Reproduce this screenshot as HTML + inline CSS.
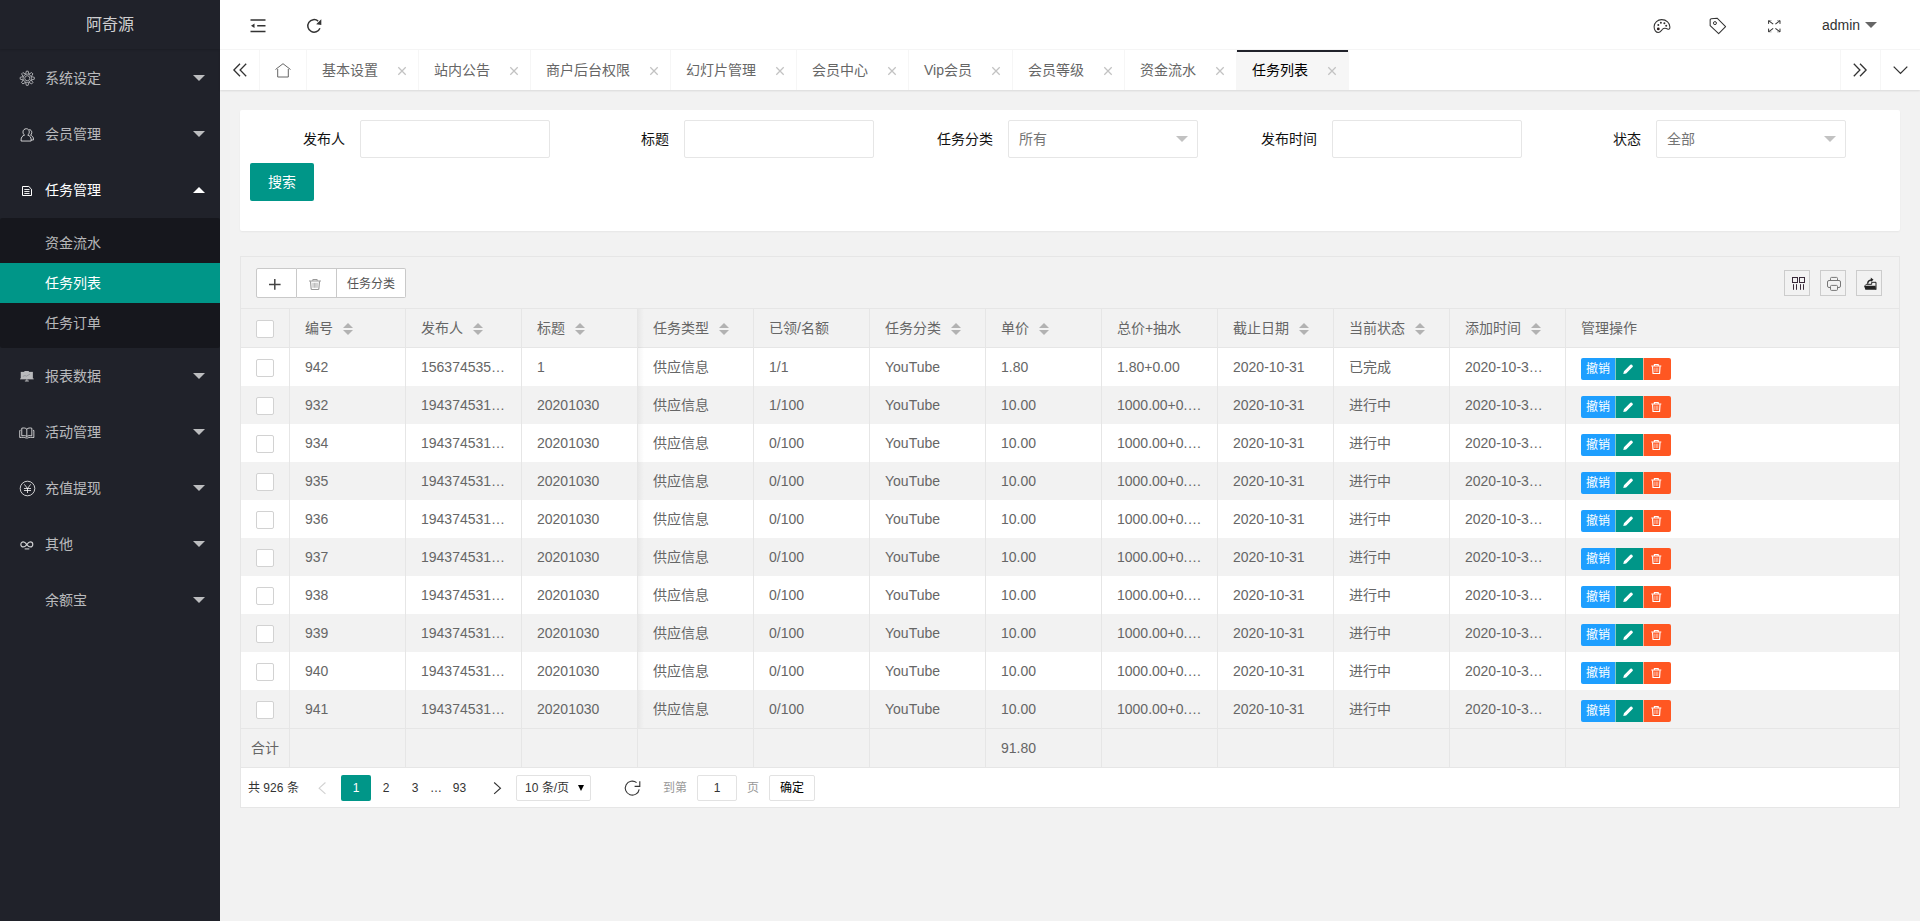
<!DOCTYPE html>
<html lang="zh-CN">
<head>
<meta charset="utf-8">
<title>任务列表</title>
<style>
*{box-sizing:border-box;margin:0;padding:0}
html,body{width:1920px;height:921px;overflow:hidden;background:#f2f2f2}
body{position:relative;font-family:"Liberation Sans",sans-serif;font-size:14px;color:#666;line-height:24px}
.abs{position:absolute}
.nw{white-space:nowrap;overflow:hidden}
svg{display:block;position:absolute;overflow:visible}
/* side */
#side{position:absolute;left:0;top:0;width:220px;height:921px;background:#20222a;overflow:hidden}
#logo{position:absolute;left:0;top:0;width:220px;height:49px;line-height:49px;text-align:center;font-size:16px;color:rgba(255,255,255,.8);box-shadow:0 1px 2px 0 rgba(0,0,0,.15);white-space:nowrap}
.ni{position:absolute;left:0;width:220px;height:56px;line-height:56px;color:rgba(255,255,255,.7);white-space:nowrap}
.ni span{position:absolute;left:45px;top:0}
.ni i{position:absolute;left:193px;top:25px;width:0;height:0;border:6px solid transparent;border-top-color:rgba(255,255,255,.7);border-bottom-width:0}
.ni i.up{top:25px;border:6px solid transparent;border-bottom-color:#fff;border-top-width:0}
#sub{position:absolute;left:0;top:218px;width:220px;height:130px;background:rgba(0,0,0,.3);border-radius:2px}
.si{position:absolute;left:0;width:220px;height:40px;line-height:40px;padding-left:45px;color:rgba(255,255,255,.7);white-space:nowrap}
.si.on{background:#009688;color:#fff}
/* header */
#hd{position:absolute;left:220px;top:0;width:1700px;height:50px;background:#fff;border-bottom:1px solid #f6f6f6}
#tabs{position:absolute;left:220px;top:50px;width:1700px;height:40px;background:#fff;box-shadow:0 1px 2px 0 rgba(0,0,0,.1)}
.tb{position:absolute;top:0;height:40px;line-height:40px;border-right:1px solid #f6f6f6;padding-left:15px;color:#666;white-space:nowrap;overflow:hidden}
.tb.on{background:#f6f6f6;color:#000}
.tb.on:before{content:"";position:absolute;left:0;top:0;right:0;height:2px;background:#20222a}
.tc{position:absolute;top:0;height:40px;width:40px}
/* card */
#c1{position:absolute;left:240px;top:110px;width:1660px;height:121px;background:#fff;border-radius:2px;box-shadow:0 1px 2px 0 rgba(0,0,0,.05)}
.lb{position:absolute;top:120px;width:110px;height:38px;line-height:38px;padding-right:15px;text-align:right;color:#111;white-space:nowrap;overflow:hidden}
.ip{position:absolute;top:120px;width:190px;height:38px;line-height:36px;border:1px solid #e6e6e6;border-radius:2px;background:#fff;padding-left:10px;color:#757575;white-space:nowrap;overflow:hidden}
.ip i{position:absolute;right:9px;top:15px;width:0;height:0;border:6px solid transparent;border-top-color:#c2c2c2;border-bottom-width:0}
#sbtn{position:absolute;left:250px;top:163px;width:64px;height:38px;line-height:38px;background:#009688;color:#fff;text-align:center;border-radius:2px;white-space:nowrap;overflow:hidden}
/* table */
#tv{position:absolute;left:240px;top:256px;width:1660px;height:552px;border:1px solid #e6e6e6;background:#fff}
#tool{position:absolute;left:241px;top:257px;width:1658px;height:52px;background:#f2f2f2;border-bottom:1px solid #e6e6e6}
.tbn{position:absolute;top:268px;height:30px;line-height:30px;background:#fff;border:1px solid #c9c9c9;color:#555;font-size:12px;text-align:center;white-space:nowrap;overflow:hidden}
.tl{position:absolute;top:270px;width:26px;height:26px;border:1px solid #ccc;background:transparent}
#th{position:absolute;left:241px;top:309px;width:1658px;height:39px;background:#f2f2f2;border-bottom:1px solid #e6e6e6}
.r{position:absolute;left:241px;width:1658px;height:38px;background:#fff}
.r.e{background:#f2f2f2}
.c{position:absolute;top:5px;height:28px;line-height:28px;width:85px;white-space:nowrap;overflow:hidden;color:#666}
.vl{position:absolute;top:309px;width:1px;height:459px;background:#e6e6e6}
.cb{position:absolute;left:15px;width:18px;height:18px;border:1px solid #d2d2d2;border-radius:2px;background:#fff}
.so{position:absolute;top:11px;width:10px;height:20px}
.so:before{content:"";position:absolute;left:0;top:3px;border:5px solid transparent;border-bottom-color:#b2b2b2;border-top-width:0}
.so:after{content:"";position:absolute;left:0;top:10px;border:5px solid transparent;border-top-color:#b2b2b2;border-bottom-width:0}
.ob{position:absolute;top:10px;height:22px;line-height:22px;font-size:12px;color:#fff;text-align:center;white-space:nowrap;overflow:hidden}
#tot{position:absolute;left:241px;top:729px;width:1658px;height:39px;background:#f2f2f2;border-bottom:1px solid #e6e6e6;border-top:0}
#hl{position:absolute;left:241px;top:728px;width:1658px;height:1px;background:#e6e6e6}
/* page */
.pg{position:absolute;top:775px;height:26px;line-height:26px;font-size:12px;color:#333;white-space:nowrap;overflow:hidden;text-align:center}
</style>
</head>
<body>
<div id="side">
<div id="logo">阿奇源</div>
<div class="ni" style="top:50px"><svg style="left:18.600px;top:20.400px" width="16.500" height="16.500" viewBox="-8.500 -8.500 17 17"><g fill="none" stroke="#c4c5c8" stroke-width=".820" stroke-linejoin="round"><circle r="4.300"/><circle r="2.600"/><path d="M-1.700 -4.200L-.950 -7.300H.950L1.700 -4.200" transform="rotate(0)"/><path d="M-1.700 -4.200L-.950 -7.300H.950L1.700 -4.200" transform="rotate(45)"/><path d="M-1.700 -4.200L-.950 -7.300H.950L1.700 -4.200" transform="rotate(90)"/><path d="M-1.700 -4.200L-.950 -7.300H.950L1.700 -4.200" transform="rotate(135)"/><path d="M-1.700 -4.200L-.950 -7.300H.950L1.700 -4.200" transform="rotate(180)"/><path d="M-1.700 -4.200L-.950 -7.300H.950L1.700 -4.200" transform="rotate(225)"/><path d="M-1.700 -4.200L-.950 -7.300H.950L1.700 -4.200" transform="rotate(270)"/><path d="M-1.700 -4.200L-.950 -7.300H.950L1.700 -4.200" transform="rotate(315)"/></g></svg><span>系统设定</span><i></i></div>
<div class="ni" style="top:106px"><svg style="left:19.600px;top:21.500px" width="15.300" height="14.400" viewBox="0 0 17 16"><g fill="none" stroke="rgba(255,255,255,.78)" stroke-width="1.1" stroke-linejoin="round"><path d="M7 .8c2 0 3.3 1.5 3.3 3.6 0 1.5-.7 2.8-1.7 3.5 2.3.6 3.8 2.5 3.8 5.3v1.3H1.2v-1.300c0-2.800 1.500-4.700 3.800-5.300-1-.7-1.700-2-1.700-3.500C3.300 2.300 5 .8 7 .8z"/><path d="M10.300 1.700c1.700.200 2.800 1.500 2.800 3.300 0 1.300-.5 2.300-1.400 3 1.900.6 3.300 2.200 3.300 4.600v.7h-2.500"/></g></svg><span>会员管理</span><i></i></div>
<div class="ni" style="top:162px;color:#fff"><svg style="left:22px;top:24px" width="10" height="10" viewBox="0 0 10 10"><g fill="none" stroke="#fff" stroke-width="1"><path d="M.500 .500H6.800L9.500 3.200V9.500H.500z" stroke-linejoin="round"/><path d="M2.300 3.500H7.500M2.300 5.500H7.500M2.300 7.500H7.500" stroke-opacity=".9"/></g></svg><span>任务管理</span><i class="up"></i></div>
<div class="ni" style="top:348px"><svg style="left:20.200px;top:23px" width="14.200" height="11.300" preserveAspectRatio="none" viewBox="0 0 15 13"><g fill="#b9babc"><rect x="4.500" y="0" width="5" height="1.500" rx=".5"/><rect x=".8" y="1" width="12.800" height="8.200"/><rect x="0" y="8.600" width="14.500" height="1"/><rect x="6.600" y="9.500" width="1.300" height="1.800"/><rect x="5" y="11" width="4.500" height="1" rx=".5"/></g><path d="M3 6.200l2.300-1 1.500.8 3.800-2.500" fill="none" stroke="#84858b" stroke-width=".700"/></svg><span>报表数据</span><i></i></div>
<div class="ni" style="top:404px"><svg style="left:19.300px;top:22.700px" width="15.600" height="12" preserveAspectRatio="none" viewBox="0 0 17 13"><g fill="none" stroke="rgba(255,255,255,.78)" stroke-width="1.050" stroke-linejoin="round"><path d="M8.500 2.300C7.300 1 5 .8 3 1.300v8.200c2-.4 4.300-.2 5.500.8 1.200-1 3.500-1.200 5.500-.8V1.300c-2-.5-4.300-.3-5.500 1zM8.500 2.300v8"/><path d="M1.800 3.500L.8 3.800v7.600c2.500-.3 5.500-.4 6.700.5h2c1.200-.9 4.200-.8 6.700-.5V3.800l-1-.3"/></g></svg><span>活动管理</span><i></i></div>
<div class="ni" style="top:460px"><svg style="left:19px;top:20px" width="17" height="17" viewBox="0 0 17 17"><g fill="none" stroke="rgba(255,255,255,.78)" stroke-width="1"><circle cx="8.500" cy="8.500" r="7.300"/><path d="M5.300 4.300l3.200 4.200 3.200-4.200M8.500 8.500v4.500M5 8.500h7M5 10.500h7"/></g></svg><span>充值提现</span><i></i></div>
<div class="ni" style="top:516px"><svg style="left:20px;top:24.500px" width="14" height="9.300" viewBox="0 0 15 10"><g fill="none" stroke="rgba(255,255,255,.78)" stroke-width="1.300"><path d="M7.300 3.800C6 2 4.800 1 3.500 1 2 1 .9 2.100.9 3.700S2 6.400 3.500 6.400c1.300 0 2.500-1 3.800-2.600zM7.300 3.800C8.600 2 9.800 1 11.100 1c1.500 0 2.600 1.100 2.600 2.700s-1.100 2.700-2.600 2.700c-1.300 0-2.500-1-3.800-2.600z"/><path d="M5 8.500h5" stroke-width="1.200"/></g></svg><span>其他</span><i></i></div>
<div class="ni" style="top:572px"><span>余额宝</span><i></i></div>
<div id="sub"></div>
<div class="si" style="top:223px">资金流水</div>
<div class="si on" style="top:263px">任务列表</div>
<div class="si" style="top:303px">任务订单</div>
</div>
<div id="hd">
<svg style="left:30px;top:17px" width="16" height="17" viewBox="0 0 16 17"><g fill="none" stroke="#333" stroke-width="1.500"><path d="M.500 3h15M7.200 8.800H15.500M.500 14.400h15"/></g><path d="M1 8.800l3.500-2.200v4.400z" fill="#333"/></svg>
<svg style="left:86px;top:18px" width="16" height="16" viewBox="0 0 16 16"><path d="M13.940 10.260A6.300 6.300 0 1 1 12.150 3.070" fill="none" stroke="#333" stroke-width="1.500"/><path d="M15.300 1.300V7L10.200 6.300z" fill="#333"/></svg>
<svg style="left:1433px;top:19.400px" width="18" height="15" viewBox="0 0 18 15"><path d="M8.600 .600C4.800 .600 1.100 3.500 1.100 7.700C1.100 11 3 13.500 5.300 13.500C7.500 13.500 8.200 11.500 9.900 9.900C11.300 8.700 13 9.200 15.100 10.200C16.300 10.500 16.900 10 16.900 8C16.900 4 13.500 .600 8.600 .600z" fill="none" stroke="#333" stroke-width="1.050"/><circle cx="5.300" cy="9.900" r="1.400" fill="#2a1a1a"/><circle cx="5.300" cy="5.900" r="1" fill="#333"/><circle cx="7.900" cy="3.800" r="1" fill="#333"/><circle cx="11.400" cy="4.200" r="1" fill="#333"/><circle cx="13.200" cy="6.800" r="1" fill="#333"/></svg>
<svg style="left:1489px;top:17px" width="18" height="18" viewBox="0 0 18 18"><path d="M2.200 1.650L8.100 1.200L16.600 9.700L9.650 16.650L1.150 8.550V2.600z" fill="none" stroke="#333" stroke-width="1.050" stroke-linejoin="round"/><circle cx="5.950" cy="6.100" r="1.500" fill="none" stroke="#333" stroke-width="1"/></svg>
<svg style="left:1547.800px;top:19.500px" width="12.600" height="12.500" viewBox="0 0 12.600 12.500"><g fill="none" stroke="#333" stroke-width="1"><path d="M.600 3.900V.600M12 .600V3.900M.600 8.600V11.900M12 8.600V11.900"/><path d="M.600 .600L5.200 4.200M12 .600L7.400 4.200M.600 11.900L5.200 8.300M12 11.900L7.400 8.300" stroke-width="1.050"/><path d="M.600 .600H3.600M9 .600H12M.600 11.900H3.600M12 11.900H9" stroke-opacity=".4"/></g></svg>
<div class="abs nw" style="left:1602px;top:12px;height:26px;line-height:26px;color:#333;width:40px">admin</div>
<i class="abs" style="left:1645px;top:22px;border:6px solid transparent;border-top-color:#666;border-bottom-width:0"></i>
</div>
<div id="tabs">
<div class="tc" style="left:0;border-right:1px solid #f6f6f6"><svg style="left:13px;top:13px" width="14" height="14" viewBox="0 0 14 14"><path d="M7 .800L.900 7 7 13.200M13.200 .800L7.100 7l6.100 6.200" fill="none" stroke="#333" stroke-width="1.300"/></svg></div>
<div class="tb" style="left:40px;width:47px"><svg style="left:15px;top:12.500px" width="16" height="15" viewBox="0 0 16 15"><path d="M.500 6.500L8 .700l7.500 5.800" fill="none" stroke="#666" stroke-width="1"/><path d="M2.700 6v8h10.600V6" fill="none" stroke="#666" stroke-width="1"/></svg></div>
<div class="tb" style="left:87px;width:112px">基本设置<svg style="right:12px;top:16.500px" width="8" height="8" viewBox="0 0 8 8"><path d="M.300 .300l7.400 7.400M7.700 .300L.300 7.700" stroke="#c2c2c2" stroke-width="1.250" fill="none"/></svg></div>
<div class="tb" style="left:199px;width:112px">站内公告<svg style="right:12px;top:16.500px" width="8" height="8" viewBox="0 0 8 8"><path d="M.300 .300l7.400 7.400M7.700 .300L.300 7.700" stroke="#c2c2c2" stroke-width="1.250" fill="none"/></svg></div>
<div class="tb" style="left:311px;width:140px">商户后台权限<svg style="right:12px;top:16.500px" width="8" height="8" viewBox="0 0 8 8"><path d="M.300 .300l7.400 7.400M7.700 .300L.300 7.700" stroke="#c2c2c2" stroke-width="1.250" fill="none"/></svg></div>
<div class="tb" style="left:451px;width:126px">幻灯片管理<svg style="right:12px;top:16.500px" width="8" height="8" viewBox="0 0 8 8"><path d="M.300 .300l7.400 7.400M7.700 .300L.300 7.700" stroke="#c2c2c2" stroke-width="1.250" fill="none"/></svg></div>
<div class="tb" style="left:577px;width:112px">会员中心<svg style="right:12px;top:16.500px" width="8" height="8" viewBox="0 0 8 8"><path d="M.300 .300l7.400 7.400M7.700 .300L.300 7.700" stroke="#c2c2c2" stroke-width="1.250" fill="none"/></svg></div>
<div class="tb" style="left:689px;width:104px">Vip会员<svg style="right:12px;top:16.500px" width="8" height="8" viewBox="0 0 8 8"><path d="M.300 .300l7.400 7.400M7.700 .300L.300 7.700" stroke="#c2c2c2" stroke-width="1.250" fill="none"/></svg></div>
<div class="tb" style="left:793px;width:112px">会员等级<svg style="right:12px;top:16.500px" width="8" height="8" viewBox="0 0 8 8"><path d="M.300 .300l7.400 7.400M7.700 .300L.300 7.700" stroke="#c2c2c2" stroke-width="1.250" fill="none"/></svg></div>
<div class="tb" style="left:905px;width:112px">资金流水<svg style="right:12px;top:16.500px" width="8" height="8" viewBox="0 0 8 8"><path d="M.300 .300l7.400 7.400M7.700 .300L.300 7.700" stroke="#c2c2c2" stroke-width="1.250" fill="none"/></svg></div>
<div class="tb on" style="left:1017px;width:112px">任务列表<svg style="right:12px;top:16.500px" width="8" height="8" viewBox="0 0 8 8"><path d="M.300 .300l7.400 7.400M7.700 .300L.300 7.700" stroke="#c2c2c2" stroke-width="1.250" fill="none"/></svg></div>
<div class="tc" style="left:1620px;border-left:1px solid #f6f6f6"><svg style="left:12px;top:13px" width="14" height="14" viewBox="0 0 14 14"><path d="M.800 .800L6.900 7 .800 13.200M7 .800L13.100 7 7 13.200" fill="none" stroke="#333" stroke-width="1.300"/></svg></div>
<div class="tc" style="left:1660px;border-left:1px solid #f6f6f6"><svg style="left:12px;top:15.600px" width="15" height="8.500" viewBox="0 0 15 9" preserveAspectRatio="none"><path d="M.700 .700L7.500 7.800 14.300 .700" fill="none" stroke="#333" stroke-width="1.300"/></svg></div>
</div>
<div id="c1"></div>
<div class="lb" style="left:250px">发布人</div><div class="ip" style="left:360px"></div>
<div class="lb" style="left:574px">标题</div><div class="ip" style="left:684px"></div>
<div class="lb" style="left:898px">任务分类</div><div class="ip" style="left:1008px">所有<i></i></div>
<div class="lb" style="left:1222px">发布时间</div><div class="ip" style="left:1332px"></div>
<div class="lb" style="left:1546px">状态</div><div class="ip" style="left:1656px">全部<i></i></div>
<div id="sbtn">搜索</div>
<div id="tv"></div>
<div id="tool"></div>
<div class="tbn" style="left:256px;width:41px;border-radius:2px 0 0 2px"><svg style="left:12.200px;top:10.100px" width="11.600" height="10.800" viewBox="0 0 11.600 10.800"><path d="M5.800 0v10.800M0 5.400h11.600" stroke="#444" stroke-width="1.500" fill="none"/></svg></div><div class="tbn" style="left:297px;width:40px;border-left:0"><svg style="left:12px;top:10px" width="12" height="11" viewBox="0 0 12 11"><g fill="none" stroke="#999" stroke-width="1"><path d="M0 2h12M3.800 1.800V.500h4.400v1.300"/><path d="M1.500 2.300l.600 7.200a1 1 0 0 0 1 1h5.800a1 1 0 0 0 1-1l.600-7.200" stroke-width="1.100"/><path d="M4 3.800v5M5.400 3.800v5M6.800 3.800v5M8.100 3.800v5" stroke-width=".7"/></g></svg></div><div class="tbn" style="left:337px;width:69px;border-left:0;border-radius:0 2px 2px 0">任务分类</div>
<div class="tl" style="left:1784px"><svg style="left:-1px;top:-1px" width="26" height="26" viewBox="0 0 26 26"><g fill="none" stroke="#3a2a3a" stroke-width="1"><rect x="8.500" y="7.500" width="5" height="5"/><rect x="15.500" y="7.500" width="5" height="5"/><path d="M9.500 14.200v5.600M12.500 14.200v5.600M16.500 14.200v5.600M19.500 14.200v5.600"/></g></svg></div><div class="tl" style="left:1820px"><svg style="left:-1px;top:-1px" width="26" height="26" viewBox="0 0 26 26"><g fill="none" stroke="#777" stroke-width="1"><path d="M10.500 10.500V8.400a1 1 0 0 1 1-1h5a1 1 0 0 1 1 1v2.100"/><path d="M10.500 17.500H9a1.500 1.500 0 0 1-1.500-1.500v-4A1.500 1.500 0 0 1 9 10.500h10a1.500 1.500 0 0 1 1.500 1.500v4a1.500 1.500 0 0 1-1.500 1.500h-1.500"/><rect x="10.500" y="15.400" width="7" height="5" rx="1"/></g></svg></div><div class="tl" style="left:1856px"><svg style="left:-1px;top:-1px" width="26" height="26" viewBox="0 0 26 26"><path d="M8 15.800h11.500l.5 4H9.400z" fill="#222"/><path d="M9.200 15.600l1-1.300h5.500v-2h4.300v7.400" fill="none" stroke="#222" stroke-width="1"/><path d="M11.600 13.800c.2-2.300 1.400-3.600 3.600-3.800" fill="none" stroke="#222" stroke-width="1.300"/><path d="M14.800 7.600l2.700 2.200-2.700 2.200z" fill="#222"/></svg></div>
<div id="th">
<div class="cb" style="top:11px"></div>
<div class="c" style="left:64px;top:5px;width:100px">编号</div><div class="so" style="left:102px"></div>
<div class="c" style="left:180px;top:5px;width:100px">发布人</div><div class="so" style="left:232px"></div>
<div class="c" style="left:296px;top:5px;width:100px">标题</div><div class="so" style="left:334px"></div>
<div class="c" style="left:412px;top:5px;width:100px">任务类型</div><div class="so" style="left:478px"></div>
<div class="c" style="left:528px;top:5px;width:100px">已领/名额</div>
<div class="c" style="left:644px;top:5px;width:100px">任务分类</div><div class="so" style="left:710px"></div>
<div class="c" style="left:760px;top:5px;width:100px">单价</div><div class="so" style="left:798px"></div>
<div class="c" style="left:876px;top:5px;width:100px">总价+抽水</div>
<div class="c" style="left:992px;top:5px;width:100px">截止日期</div><div class="so" style="left:1058px"></div>
<div class="c" style="left:1108px;top:5px;width:100px">当前状态</div><div class="so" style="left:1174px"></div>
<div class="c" style="left:1224px;top:5px;width:100px">添加时间</div><div class="so" style="left:1290px"></div>
<div class="c" style="left:1340px;top:5px;width:100px">管理操作</div>
</div>
<div class="r" style="top:348px"><div class="cb" style="top:11px"></div><div class="c" style="left:64px">942</div><div class="c" style="left:180px">156374535…</div><div class="c" style="left:296px">1</div><div class="c" style="left:412px">供应信息</div><div class="c" style="left:528px">1/1</div><div class="c" style="left:644px">YouTube</div><div class="c" style="left:760px">1.80</div><div class="c" style="left:876px">1.80+0.00</div><div class="c" style="left:992px">2020-10-31</div><div class="c" style="left:1108px">已完成</div><div class="c" style="left:1224px">2020-10-3…</div><div class="ob" style="left:1340px;width:34px;background:#1e9fff;border-radius:2px 0 0 2px">撤销</div><div class="ob" style="left:1374px;width:28px;background:#009688;border-left:1px solid rgba(255,255,255,.5)"><svg style="left:7px;top:5.700px" width="10.400" height="10.400" viewBox="0 0 11 11"><path d="M.300 10.700l.700-3L7.800 .900a1.200 1.200 0 0 1 1.700 0l.600.600a1.200 1.200 0 0 1 0 1.700L3.300 10z" fill="#fff"/></svg></div><div class="ob" style="left:1402px;width:28px;background:#ff5722;border-left:1px solid rgba(255,255,255,.5);border-radius:0 2px 2px 0"><svg style="left:7px;top:5.800px" width="10.600" height="10" preserveAspectRatio="none" viewBox="0 0 11 11"><g fill="none" stroke="#fff" stroke-width="1.100"><path d="M.300 2.200h10.400M3.500 2V.600h4V2"/><path d="M1.600 2.500l.500 7.900h6.800l.500-7.900" stroke-width="1.200"/><path d="M4 4v4.800M5.500 4v4.800M7 4v4.800" stroke-width=".8" stroke="#ffd0c0"/></g></svg></div></div>
<div class="r e" style="top:386px"><div class="cb" style="top:11px"></div><div class="c" style="left:64px">932</div><div class="c" style="left:180px">194374531…</div><div class="c" style="left:296px">20201030</div><div class="c" style="left:412px">供应信息</div><div class="c" style="left:528px">1/100</div><div class="c" style="left:644px">YouTube</div><div class="c" style="left:760px">10.00</div><div class="c" style="left:876px">1000.00+0.…</div><div class="c" style="left:992px">2020-10-31</div><div class="c" style="left:1108px">进行中</div><div class="c" style="left:1224px">2020-10-3…</div><div class="ob" style="left:1340px;width:34px;background:#1e9fff;border-radius:2px 0 0 2px">撤销</div><div class="ob" style="left:1374px;width:28px;background:#009688;border-left:1px solid rgba(255,255,255,.5)"><svg style="left:7px;top:5.700px" width="10.400" height="10.400" viewBox="0 0 11 11"><path d="M.300 10.700l.700-3L7.800 .900a1.200 1.200 0 0 1 1.700 0l.600.600a1.200 1.200 0 0 1 0 1.700L3.300 10z" fill="#fff"/></svg></div><div class="ob" style="left:1402px;width:28px;background:#ff5722;border-left:1px solid rgba(255,255,255,.5);border-radius:0 2px 2px 0"><svg style="left:7px;top:5.800px" width="10.600" height="10" preserveAspectRatio="none" viewBox="0 0 11 11"><g fill="none" stroke="#fff" stroke-width="1.100"><path d="M.300 2.200h10.400M3.500 2V.600h4V2"/><path d="M1.600 2.500l.500 7.900h6.800l.500-7.900" stroke-width="1.200"/><path d="M4 4v4.800M5.500 4v4.800M7 4v4.800" stroke-width=".8" stroke="#ffd0c0"/></g></svg></div></div>
<div class="r" style="top:424px"><div class="cb" style="top:11px"></div><div class="c" style="left:64px">934</div><div class="c" style="left:180px">194374531…</div><div class="c" style="left:296px">20201030</div><div class="c" style="left:412px">供应信息</div><div class="c" style="left:528px">0/100</div><div class="c" style="left:644px">YouTube</div><div class="c" style="left:760px">10.00</div><div class="c" style="left:876px">1000.00+0.…</div><div class="c" style="left:992px">2020-10-31</div><div class="c" style="left:1108px">进行中</div><div class="c" style="left:1224px">2020-10-3…</div><div class="ob" style="left:1340px;width:34px;background:#1e9fff;border-radius:2px 0 0 2px">撤销</div><div class="ob" style="left:1374px;width:28px;background:#009688;border-left:1px solid rgba(255,255,255,.5)"><svg style="left:7px;top:5.700px" width="10.400" height="10.400" viewBox="0 0 11 11"><path d="M.300 10.700l.700-3L7.800 .900a1.200 1.200 0 0 1 1.700 0l.600.600a1.200 1.200 0 0 1 0 1.700L3.300 10z" fill="#fff"/></svg></div><div class="ob" style="left:1402px;width:28px;background:#ff5722;border-left:1px solid rgba(255,255,255,.5);border-radius:0 2px 2px 0"><svg style="left:7px;top:5.800px" width="10.600" height="10" preserveAspectRatio="none" viewBox="0 0 11 11"><g fill="none" stroke="#fff" stroke-width="1.100"><path d="M.300 2.200h10.400M3.500 2V.600h4V2"/><path d="M1.600 2.500l.500 7.900h6.800l.500-7.900" stroke-width="1.200"/><path d="M4 4v4.800M5.500 4v4.800M7 4v4.800" stroke-width=".8" stroke="#ffd0c0"/></g></svg></div></div>
<div class="r e" style="top:462px"><div class="cb" style="top:11px"></div><div class="c" style="left:64px">935</div><div class="c" style="left:180px">194374531…</div><div class="c" style="left:296px">20201030</div><div class="c" style="left:412px">供应信息</div><div class="c" style="left:528px">0/100</div><div class="c" style="left:644px">YouTube</div><div class="c" style="left:760px">10.00</div><div class="c" style="left:876px">1000.00+0.…</div><div class="c" style="left:992px">2020-10-31</div><div class="c" style="left:1108px">进行中</div><div class="c" style="left:1224px">2020-10-3…</div><div class="ob" style="left:1340px;width:34px;background:#1e9fff;border-radius:2px 0 0 2px">撤销</div><div class="ob" style="left:1374px;width:28px;background:#009688;border-left:1px solid rgba(255,255,255,.5)"><svg style="left:7px;top:5.700px" width="10.400" height="10.400" viewBox="0 0 11 11"><path d="M.300 10.700l.700-3L7.800 .900a1.200 1.200 0 0 1 1.700 0l.600.600a1.200 1.200 0 0 1 0 1.700L3.300 10z" fill="#fff"/></svg></div><div class="ob" style="left:1402px;width:28px;background:#ff5722;border-left:1px solid rgba(255,255,255,.5);border-radius:0 2px 2px 0"><svg style="left:7px;top:5.800px" width="10.600" height="10" preserveAspectRatio="none" viewBox="0 0 11 11"><g fill="none" stroke="#fff" stroke-width="1.100"><path d="M.300 2.200h10.400M3.500 2V.600h4V2"/><path d="M1.600 2.500l.500 7.900h6.800l.500-7.900" stroke-width="1.200"/><path d="M4 4v4.800M5.500 4v4.800M7 4v4.800" stroke-width=".8" stroke="#ffd0c0"/></g></svg></div></div>
<div class="r" style="top:500px"><div class="cb" style="top:11px"></div><div class="c" style="left:64px">936</div><div class="c" style="left:180px">194374531…</div><div class="c" style="left:296px">20201030</div><div class="c" style="left:412px">供应信息</div><div class="c" style="left:528px">0/100</div><div class="c" style="left:644px">YouTube</div><div class="c" style="left:760px">10.00</div><div class="c" style="left:876px">1000.00+0.…</div><div class="c" style="left:992px">2020-10-31</div><div class="c" style="left:1108px">进行中</div><div class="c" style="left:1224px">2020-10-3…</div><div class="ob" style="left:1340px;width:34px;background:#1e9fff;border-radius:2px 0 0 2px">撤销</div><div class="ob" style="left:1374px;width:28px;background:#009688;border-left:1px solid rgba(255,255,255,.5)"><svg style="left:7px;top:5.700px" width="10.400" height="10.400" viewBox="0 0 11 11"><path d="M.300 10.700l.700-3L7.800 .900a1.200 1.200 0 0 1 1.700 0l.600.600a1.200 1.200 0 0 1 0 1.700L3.300 10z" fill="#fff"/></svg></div><div class="ob" style="left:1402px;width:28px;background:#ff5722;border-left:1px solid rgba(255,255,255,.5);border-radius:0 2px 2px 0"><svg style="left:7px;top:5.800px" width="10.600" height="10" preserveAspectRatio="none" viewBox="0 0 11 11"><g fill="none" stroke="#fff" stroke-width="1.100"><path d="M.300 2.200h10.400M3.500 2V.600h4V2"/><path d="M1.600 2.500l.500 7.900h6.800l.500-7.900" stroke-width="1.200"/><path d="M4 4v4.800M5.500 4v4.800M7 4v4.800" stroke-width=".8" stroke="#ffd0c0"/></g></svg></div></div>
<div class="r e" style="top:538px"><div class="cb" style="top:11px"></div><div class="c" style="left:64px">937</div><div class="c" style="left:180px">194374531…</div><div class="c" style="left:296px">20201030</div><div class="c" style="left:412px">供应信息</div><div class="c" style="left:528px">0/100</div><div class="c" style="left:644px">YouTube</div><div class="c" style="left:760px">10.00</div><div class="c" style="left:876px">1000.00+0.…</div><div class="c" style="left:992px">2020-10-31</div><div class="c" style="left:1108px">进行中</div><div class="c" style="left:1224px">2020-10-3…</div><div class="ob" style="left:1340px;width:34px;background:#1e9fff;border-radius:2px 0 0 2px">撤销</div><div class="ob" style="left:1374px;width:28px;background:#009688;border-left:1px solid rgba(255,255,255,.5)"><svg style="left:7px;top:5.700px" width="10.400" height="10.400" viewBox="0 0 11 11"><path d="M.300 10.700l.700-3L7.800 .900a1.200 1.200 0 0 1 1.700 0l.600.600a1.200 1.200 0 0 1 0 1.700L3.300 10z" fill="#fff"/></svg></div><div class="ob" style="left:1402px;width:28px;background:#ff5722;border-left:1px solid rgba(255,255,255,.5);border-radius:0 2px 2px 0"><svg style="left:7px;top:5.800px" width="10.600" height="10" preserveAspectRatio="none" viewBox="0 0 11 11"><g fill="none" stroke="#fff" stroke-width="1.100"><path d="M.300 2.200h10.400M3.500 2V.600h4V2"/><path d="M1.600 2.500l.500 7.900h6.800l.500-7.900" stroke-width="1.200"/><path d="M4 4v4.800M5.500 4v4.800M7 4v4.800" stroke-width=".8" stroke="#ffd0c0"/></g></svg></div></div>
<div class="r" style="top:576px"><div class="cb" style="top:11px"></div><div class="c" style="left:64px">938</div><div class="c" style="left:180px">194374531…</div><div class="c" style="left:296px">20201030</div><div class="c" style="left:412px">供应信息</div><div class="c" style="left:528px">0/100</div><div class="c" style="left:644px">YouTube</div><div class="c" style="left:760px">10.00</div><div class="c" style="left:876px">1000.00+0.…</div><div class="c" style="left:992px">2020-10-31</div><div class="c" style="left:1108px">进行中</div><div class="c" style="left:1224px">2020-10-3…</div><div class="ob" style="left:1340px;width:34px;background:#1e9fff;border-radius:2px 0 0 2px">撤销</div><div class="ob" style="left:1374px;width:28px;background:#009688;border-left:1px solid rgba(255,255,255,.5)"><svg style="left:7px;top:5.700px" width="10.400" height="10.400" viewBox="0 0 11 11"><path d="M.300 10.700l.700-3L7.800 .900a1.200 1.200 0 0 1 1.700 0l.600.600a1.200 1.200 0 0 1 0 1.700L3.300 10z" fill="#fff"/></svg></div><div class="ob" style="left:1402px;width:28px;background:#ff5722;border-left:1px solid rgba(255,255,255,.5);border-radius:0 2px 2px 0"><svg style="left:7px;top:5.800px" width="10.600" height="10" preserveAspectRatio="none" viewBox="0 0 11 11"><g fill="none" stroke="#fff" stroke-width="1.100"><path d="M.300 2.200h10.400M3.500 2V.600h4V2"/><path d="M1.600 2.500l.500 7.900h6.800l.500-7.900" stroke-width="1.200"/><path d="M4 4v4.800M5.500 4v4.800M7 4v4.800" stroke-width=".8" stroke="#ffd0c0"/></g></svg></div></div>
<div class="r e" style="top:614px"><div class="cb" style="top:11px"></div><div class="c" style="left:64px">939</div><div class="c" style="left:180px">194374531…</div><div class="c" style="left:296px">20201030</div><div class="c" style="left:412px">供应信息</div><div class="c" style="left:528px">0/100</div><div class="c" style="left:644px">YouTube</div><div class="c" style="left:760px">10.00</div><div class="c" style="left:876px">1000.00+0.…</div><div class="c" style="left:992px">2020-10-31</div><div class="c" style="left:1108px">进行中</div><div class="c" style="left:1224px">2020-10-3…</div><div class="ob" style="left:1340px;width:34px;background:#1e9fff;border-radius:2px 0 0 2px">撤销</div><div class="ob" style="left:1374px;width:28px;background:#009688;border-left:1px solid rgba(255,255,255,.5)"><svg style="left:7px;top:5.700px" width="10.400" height="10.400" viewBox="0 0 11 11"><path d="M.300 10.700l.700-3L7.800 .900a1.200 1.200 0 0 1 1.700 0l.600.600a1.200 1.200 0 0 1 0 1.700L3.300 10z" fill="#fff"/></svg></div><div class="ob" style="left:1402px;width:28px;background:#ff5722;border-left:1px solid rgba(255,255,255,.5);border-radius:0 2px 2px 0"><svg style="left:7px;top:5.800px" width="10.600" height="10" preserveAspectRatio="none" viewBox="0 0 11 11"><g fill="none" stroke="#fff" stroke-width="1.100"><path d="M.300 2.200h10.400M3.500 2V.600h4V2"/><path d="M1.600 2.500l.500 7.900h6.800l.500-7.900" stroke-width="1.200"/><path d="M4 4v4.800M5.500 4v4.800M7 4v4.800" stroke-width=".8" stroke="#ffd0c0"/></g></svg></div></div>
<div class="r" style="top:652px"><div class="cb" style="top:11px"></div><div class="c" style="left:64px">940</div><div class="c" style="left:180px">194374531…</div><div class="c" style="left:296px">20201030</div><div class="c" style="left:412px">供应信息</div><div class="c" style="left:528px">0/100</div><div class="c" style="left:644px">YouTube</div><div class="c" style="left:760px">10.00</div><div class="c" style="left:876px">1000.00+0.…</div><div class="c" style="left:992px">2020-10-31</div><div class="c" style="left:1108px">进行中</div><div class="c" style="left:1224px">2020-10-3…</div><div class="ob" style="left:1340px;width:34px;background:#1e9fff;border-radius:2px 0 0 2px">撤销</div><div class="ob" style="left:1374px;width:28px;background:#009688;border-left:1px solid rgba(255,255,255,.5)"><svg style="left:7px;top:5.700px" width="10.400" height="10.400" viewBox="0 0 11 11"><path d="M.300 10.700l.700-3L7.800 .900a1.200 1.200 0 0 1 1.700 0l.600.600a1.200 1.200 0 0 1 0 1.700L3.300 10z" fill="#fff"/></svg></div><div class="ob" style="left:1402px;width:28px;background:#ff5722;border-left:1px solid rgba(255,255,255,.5);border-radius:0 2px 2px 0"><svg style="left:7px;top:5.800px" width="10.600" height="10" preserveAspectRatio="none" viewBox="0 0 11 11"><g fill="none" stroke="#fff" stroke-width="1.100"><path d="M.300 2.200h10.400M3.500 2V.600h4V2"/><path d="M1.600 2.500l.500 7.900h6.800l.500-7.900" stroke-width="1.200"/><path d="M4 4v4.800M5.500 4v4.800M7 4v4.800" stroke-width=".8" stroke="#ffd0c0"/></g></svg></div></div>
<div class="r e" style="top:690px"><div class="cb" style="top:11px"></div><div class="c" style="left:64px">941</div><div class="c" style="left:180px">194374531…</div><div class="c" style="left:296px">20201030</div><div class="c" style="left:412px">供应信息</div><div class="c" style="left:528px">0/100</div><div class="c" style="left:644px">YouTube</div><div class="c" style="left:760px">10.00</div><div class="c" style="left:876px">1000.00+0.…</div><div class="c" style="left:992px">2020-10-31</div><div class="c" style="left:1108px">进行中</div><div class="c" style="left:1224px">2020-10-3…</div><div class="ob" style="left:1340px;width:34px;background:#1e9fff;border-radius:2px 0 0 2px">撤销</div><div class="ob" style="left:1374px;width:28px;background:#009688;border-left:1px solid rgba(255,255,255,.5)"><svg style="left:7px;top:5.700px" width="10.400" height="10.400" viewBox="0 0 11 11"><path d="M.300 10.700l.700-3L7.800 .900a1.200 1.200 0 0 1 1.700 0l.600.600a1.200 1.200 0 0 1 0 1.700L3.300 10z" fill="#fff"/></svg></div><div class="ob" style="left:1402px;width:28px;background:#ff5722;border-left:1px solid rgba(255,255,255,.5);border-radius:0 2px 2px 0"><svg style="left:7px;top:5.800px" width="10.600" height="10" preserveAspectRatio="none" viewBox="0 0 11 11"><g fill="none" stroke="#fff" stroke-width="1.100"><path d="M.300 2.200h10.400M3.500 2V.600h4V2"/><path d="M1.600 2.500l.500 7.900h6.800l.500-7.900" stroke-width="1.200"/><path d="M4 4v4.800M5.500 4v4.800M7 4v4.800" stroke-width=".8" stroke="#ffd0c0"/></g></svg></div></div>
<div id="hl"></div>
<div id="tot"><div class="c" style="left:0;width:48px;text-align:center">合计</div><div class="c" style="left:760px">91.80</div></div>
<div class="vl" style="left:289px"></div><div class="vl" style="left:405px"></div><div class="vl" style="left:521px"></div><div class="vl" style="left:637px"></div><div class="vl" style="left:753px"></div><div class="vl" style="left:869px"></div><div class="vl" style="left:985px"></div><div class="vl" style="left:1101px"></div><div class="vl" style="left:1217px"></div><div class="vl" style="left:1333px"></div><div class="vl" style="left:1449px"></div><div class="vl" style="left:1565px"></div>
<div class="abs" style="left:638px;top:309px;width:6px;height:419px;background:linear-gradient(to right,rgba(0,0,0,.045),rgba(0,0,0,0))"></div>
<div class="pg" style="left:248px;width:56px;text-align:left">共 926 条</div>
<svg style="left:318px;top:782px" width="8.600" height="12.400" viewBox="0 0 9 13"><path d="M7.800 .500L1.200 6.500l6.600 6" fill="none" stroke="#d2d2d2" stroke-width="1.200"/></svg>
<div class="pg" style="left:341px;width:30px;background:#009688;color:#fff;border-radius:2px">1</div>
<div class="pg" style="left:371px;width:30px">2</div><div class="pg" style="left:400px;width:30px">3</div><div class="pg" style="left:430px;width:12px">…</div><div class="pg" style="left:442px;width:35px">93</div>
<svg style="left:493px;top:782px" width="8.600" height="12.400" viewBox="0 0 9 13"><path d="M1.200 .500l6.600 6-6.600 6" fill="none" stroke="#333" stroke-width="1.200"/></svg>
<div class="pg" style="left:516px;width:75px;border:1px solid #e2e2e2;border-radius:2px;line-height:24px;text-align:left;padding-left:8px;background:#fff">10 条/页<i class="abs" style="right:6px;top:9px;border:3.500px solid transparent;border-top:6px solid #000;border-bottom-width:0"></i></div>
<svg style="left:624px;top:780px" width="17" height="17" viewBox="0 0 17 17"><path d="M15.200 9.300A7 7 0 1 1 12.600 2.600" fill="none" stroke="#333" stroke-width="1.100"/><path d="M15.800 1.200v5.200h-5.200" fill="none" stroke="#333" stroke-width="1.100"/></svg>
<div class="pg" style="left:663px;width:26px;color:#999;text-align:left">到第</div>
<div class="pg" style="left:697px;width:40px;border:1px solid #e2e2e2;border-radius:2px;line-height:24px;background:#fff">1</div>
<div class="pg" style="left:747px;width:14px;color:#999;text-align:left">页</div>
<div class="pg" style="left:769px;width:46px;border:1px solid #e2e2e2;border-radius:2px;line-height:24px;color:#000;background:#fff">确定</div>
</body>
</html>
